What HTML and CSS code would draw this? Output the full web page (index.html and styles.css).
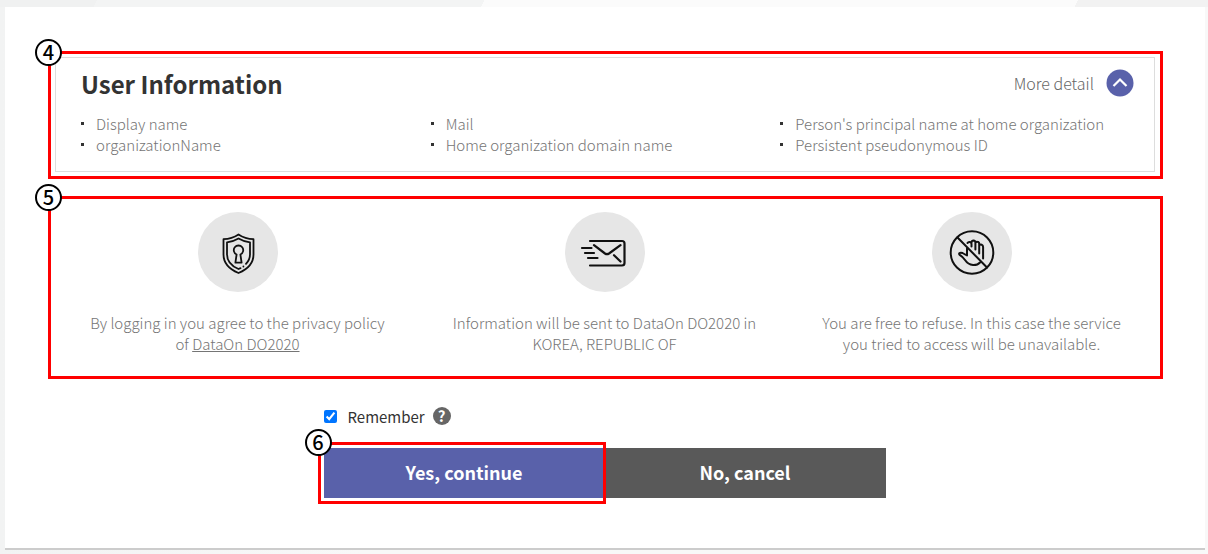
FILE: index.html
```html
<!DOCTYPE html>
<html lang="en">
<head>
<meta charset="utf-8">
<title>User Information</title>
<link rel="stylesheet" href="styles.css">
</head>
<body>
<main class="card">
  <section class="frame frame-user">
    <span class="step"><span>4</span></span>
    <div class="panel">
      <header class="panel-head">
        <h1>User Information</h1>
        <button class="more" type="button">More detail
          <svg width="28" height="28" viewBox="0 0 28 28" aria-hidden="true"><circle cx="14" cy="14" r="13.5" fill="#5961aa"/><path d="M7.5 17l6.5-6.500 6.500 6.500" fill="none" stroke="#fff" stroke-width="2.200"/></svg>
        </button>
      </header>
      <div class="attributes">
        <ul><li>Display name</li><li>organizationName</li></ul>
        <ul><li>Mail</li><li>Home organization domain name</li></ul>
        <ul><li>Person's principal name at home organization</li><li>Persistent pseudonymous ID</li></ul>
      </div>
    </div>
  </section>

  <section class="frame frame-notes">
    <span class="step"><span>5</span></span>
    <article class="note">
      <svg class="note-icon" viewBox="0 0 80 80" aria-hidden="true">
        <circle cx="40" cy="40" r="40" fill="#e6e6e6"/>
        <g fill="none" stroke="#111" stroke-width="1.800" stroke-linecap="round" stroke-linejoin="round">
          <path d="M40.500 22.500C36 25.500 31 27 25.500 27.200V42.500C25.500 51 32 57.500 40.500 61C49 57.500 55.500 51 55.500 42.500V27.200C50 27 45 25.500 40.500 22.500Z"/>
          <path d="M42.500 56.100L40.500 57C33.500 54 29 48.500 29 42.200V30.300C33.300 29.800 37 28.600 40.500 26.500C44 28.600 47.700 29.800 52 30.300V42.200C52 46 50.500 49.200 48 51.900"/>
          <path d="M45.400 54.400v.1"/>
          <path d="M38.600 42.500A4.700 4.700 0 1 1 42.400 42.500L43.600 50.700H37.400Z"/>
        </g>
      </svg>
      <p>By logging in you agree to the privacy policy<br>of <a href="#">DataOn DO2020</a></p>
    </article>
    <article class="note">
      <svg class="note-icon" viewBox="0 0 80 80" aria-hidden="true">
        <circle cx="40" cy="40" r="40" fill="#e6e6e6"/>
        <g fill="none" stroke="#111" stroke-width="2.200" stroke-linecap="round" stroke-linejoin="round">
          <path d="M25 29H57Q59.500 29 59.500 31.500V51Q59.500 53.500 57 53.500H25"/>
          <path d="M29 33.200L40 41.500Q42 42.800 44 41.500L55.500 33.200M49 43.200L55.500 49.500"/>
          <path d="M17 36h9.500M20 41h9M23 46h9.500"/>
        </g>
      </svg>
      <p>Information will be sent to DataOn DO2020 in<br>KOREA, REPUBLIC OF</p>
    </article>
    <article class="note">
      <svg class="note-icon" viewBox="0 0 80 80" aria-hidden="true">
        <circle cx="40" cy="40" r="40" fill="#e6e6e6"/>
        <g fill="none" stroke="#111" stroke-width="2" stroke-linecap="round" stroke-linejoin="round">
          <circle cx="40" cy="40.500" r="21.300"/>
          <path d="M25.500 25.500L55 55.500"/>
          <path d="M35.500 31Q36.200 29.800 37.600 30Q39.500 30.300 39.500 32V34.500M39.500 31V30.500Q39.700 28.600 41.500 28.600Q43.300 28.700 43.400 30.500V37.500M43.400 31Q43.800 29.600 45.300 29.800Q47.200 30 47.200 31.800V41.500M47.200 33.500Q48.200 32.200 49.700 32.700Q51.100 33.200 51.100 35V46.500"/>
          <path d="M35 36.500V43.500L30.500 41Q28.500 40.200 27.300 41.300Q26.800 42.300 28 43.200Q31 45 33 48Q36 52.500 41 53Q45.500 53.200 48 50.500"/>
        </g>
      </svg>
      <p>You are free to refuse. In this case the service<br>you tried to access will be unavailable.</p>
    </article>
  </section>

  <form class="consent">
    <div class="remember">
      <input type="checkbox" id="remember" checked>
      <label for="remember">Remember</label>
      <span class="help">?</span>
    </div>
    <div class="actions">
      <div class="marked">
        <span class="step"><span>6</span></span>
        <button class="yes" type="button">Yes, continue</button>
      </div>
      <button class="no" type="button">No, cancel</button>
    </div>
  </form>
</main>
</body>
</html>
```

FILE: styles.css
```css
* { box-sizing: border-box; }

body {
  margin: 0;
  padding: 7px 3px 4px 5px;
  background: linear-gradient(115deg, #f0f1f1 8%, #f3f4f4 8% 40%, #fbfbfb 40% 89%, #f2f2f2 89%) 0 0 / 100% 7px no-repeat,
    linear-gradient(90deg, #f2f3f3, #f8f8f8 30%);
  font-family: "Noto Sans CJK KR", "Noto Sans", sans-serif;
  font-size: 15px;
  line-height: 21px;
  font-weight: 300;
  color: #757575;
}

button { font: inherit; border: 0; padding: 0; cursor: pointer; }
h1, p, ul { margin: 0; padding: 0; }

.card {
  padding: 44px 42px 50px 43px;
  background: #fff;
  border-bottom: 2px solid #ccc;
}

.frame { position: relative; border: 3px solid #f00; }
.frame-user { padding: 3px 5px 4px 4px; margin-bottom: 17px; }
.frame-notes { display: grid; grid-template-columns: repeat(3, 1fr); padding: 13px 5px 22px 3px; }

.step {
  position: absolute;
  top: -15px;
  left: -16px;
  z-index: 2;
  display: grid;
  place-items: center;
  width: 27px;
  height: 27px;
  padding-bottom: 2px;
  border: 2px solid #000;
  border-radius: 50%;
  background: #fff;
  color: #000;
  font: 500 20px/20px "Noto Sans CJK KR", sans-serif;
}

.panel { padding: 8px 20px 16px 25px; border: 1px solid #ddd; }
.panel-head { display: flex; align-items: flex-start; justify-content: space-between; }
h1 { color: #333; font-size: 24px; line-height: 36px; font-weight: 700; }
.more { display: flex; align-items: center; gap: 12px; padding-top: 3px; background: none; color: #666; font-size: 16px; }

.attributes { display: grid; grid-template-columns: repeat(3, 1fr); padding: 11px 4px 0 0; }
li { display: flex; align-items: center; gap: 12px; white-space: nowrap; }
li::before { content: ""; width: 3px; height: 3px; background: #333; }

.note { display: flex; flex-direction: column; align-items: center; gap: 20px; text-align: center; }
.note-icon { width: 80px; height: 80px; }
.note a { color: inherit; text-decoration: underline; }

.consent { width: 564px; max-width: 100%; margin: 26px auto 0; padding-right: 2px; }
.remember { display: flex; align-items: center; height: 22px; margin-bottom: 21px; color: #333; font-weight: 400; }
.remember input { width: 13px; height: 13px; margin: 0 11px 0 0; accent-color: #0075ff; }
.help {
  width: 18px;
  height: 18px;
  margin-left: 8px;
  border-radius: 50%;
  background: #666;
  color: #fff;
  text-align: center;
  font: 700 15px/18px "Noto Sans CJK KR", sans-serif;
}

.actions { display: grid; grid-template-columns: 1fr 1fr; }
.marked { position: relative; display: grid; }
.marked::after { content: ""; position: absolute; inset: -6px -1px -6px -6px; border: 3px solid #f00; }
.marked .step { top: -19px; left: -19px; }
.yes, .no { height: 50px; padding-bottom: 2px; color: #fff; font-size: 18px; font-weight: 700; }
.yes { background: #5961aa; }
.no { background: #595959; }
```
